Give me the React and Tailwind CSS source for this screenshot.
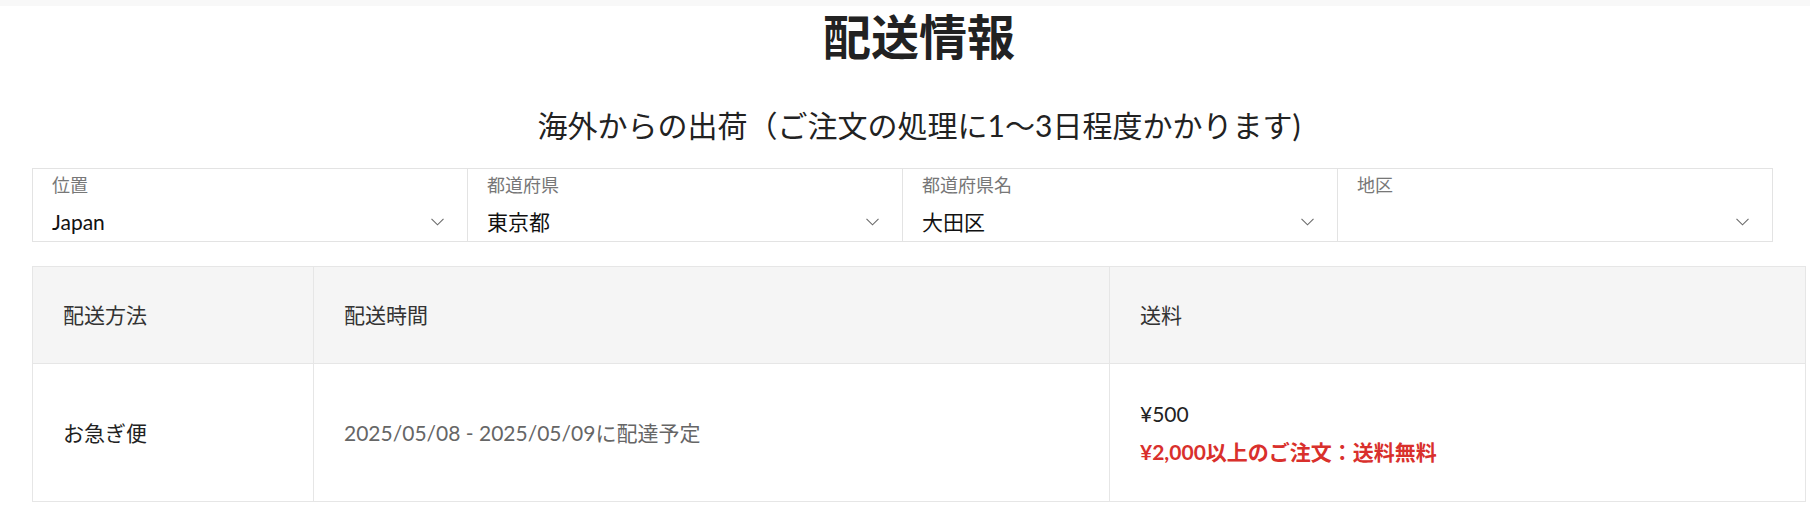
const selects = [
	{ label: "位置", value: "Japan" },
	{ label: "都道府県", value: "東京都" },
	{ label: "都道府県名", value: "大田区" },
	{ label: "地区", value: "" },
];

const Chevron = () => (
	<svg width="13" height="8" viewBox="0 0 13 8" fill="none" className="shrink-0">
		<polyline points="0.5,0.8 6.5,6.8 12.5,0.8" stroke="#6b6b6b" strokeWidth="1.1" />
	</svg>
);

const App = () => {
	return (
		<div
			className="min-h-screen bg-white text-[#222]"
			style={{ fontFamily: 'Lato, "Noto Sans CJK JP", sans-serif' }}
		>
			<div className="h-[6px] bg-[#f8f8f8]" />
			<div className="pl-8 pr-1">
				<h1 className="mt-[2px] text-center text-[48px] font-bold leading-[58px] text-[#222]">
					配送情報
				</h1>
				<p className="mt-[41px] text-center text-[30px] leading-[36px] text-[#222]">
					海外からの出荷（ご注文の処理に1〜3日程度かかります)
				</p>

				<div className="mt-[25px] flex">
					{selects.map((s, i) => (
						<div
							key={s.label}
							className={
								"flex h-[74px] w-[436px] flex-col border border-[#e3e3e3] pl-[19px] pr-[23px] pt-[4px]" +
								(i > 0 ? " -ml-px" : "")
							}
						>
							<span className="text-[18px] leading-[24px] text-[#777]">{s.label}</span>
							<div className="mt-[11px] flex h-[28px] items-center justify-between">
								<span className="text-[21px] leading-[28px] text-[#111]">{s.value}</span>
								<Chevron />
							</div>
						</div>
					))}
				</div>

				<div className="mt-[24px] border border-[#e6e6e6]">
					<div className="grid grid-cols-[281px_796px_1fr] bg-[#f5f5f5] text-[21px] text-[#333]">
						<div className="flex h-[96px] items-center border-r border-[#e6e6e6] px-[30px]">
							配送方法
						</div>
						<div className="flex h-[96px] items-center border-r border-[#e6e6e6] px-[30px]">
							配送時間
						</div>
						<div className="flex h-[96px] items-center px-[30px]">送料</div>
					</div>
					<div className="grid grid-cols-[281px_796px_1fr] border-t border-[#e6e6e6] text-[21px]">
						<div className="flex h-[137px] items-center border-r border-[#e6e6e6] px-[30px] text-[#222]">
							お急ぎ便
						</div>
						<div className="flex h-[137px] items-center border-r border-[#e6e6e6] px-[30px] text-[#666]">
							2025/05/08 - 2025/05/09に配達予定
						</div>
						<div className="flex h-[137px] flex-col justify-center gap-[10px] px-[30px]">
							<span className="leading-[28px] text-[#222]">¥500</span>
							<span className="font-bold leading-[28px] text-[#d9302c]">
								¥2,000以上のご注文：送料無料
							</span>
						</div>
					</div>
				</div>
			</div>
		</div>
	);
};

export default App;
